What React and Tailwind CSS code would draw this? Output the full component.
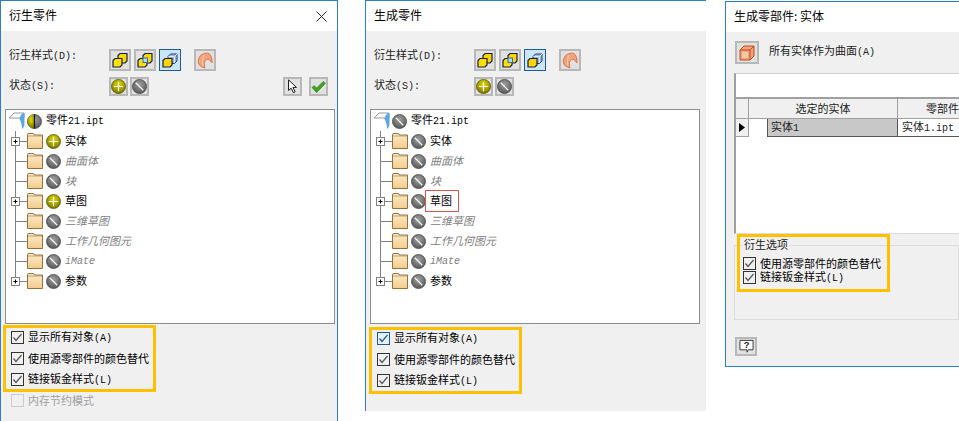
const cjk = "font-['Noto_Sans_CJK_SC','Noto_Sans_CJK_JP',sans-serif]";

function En({ children }) {
  return <span className="font-['Liberation_Mono',monospace] text-[10px]">{children}</span>;
}

function IconBtn({ children, active, size = 'big' }) {
  const box = size === 'big' ? 'w-[22px] h-[22px]' : 'w-[19px] h-[19px]';
  return (
    <div className={`${box} shrink-0 flex items-center justify-center ${active ? 'border border-[#1c5a9c] bg-[#cce4f7]' : 'border-2 border-[#b8b8b8] bg-[#e1e1e1]'}`}>
      {children}
    </div>
  );
}

function Blocks({ middle, cube }) {
  return (
    <svg width="16" height="16" viewBox="0 0 16 16" className="shrink-0">
      {cube ? (
        <>
          <path d="M6 4.5 L8.5 2 H15 V9 L12.5 11.5 H6 Z" fill="#9fb6dc" stroke="#1d3f78" />
          <path d="M6.5 4.5 H12.5 V11 M12.5 4.5 L15 2" fill="none" stroke="#dfe8f5" />
        </>
      ) : (
        <path d="M6 3.5 L8 1.5 H15 V9 L13 11 H6 Z" fill="#ffd400" stroke="#12224f" strokeWidth="1.2" />
      )}
      <path d="M1 8.5 L3 6.5 H10 V13 L8 15 H1 Z" fill={cube ? '#ffd400' : '#ffe000'} stroke="#12224f" strokeWidth="1.2" />
      {middle && <rect x="6" y="6" width="4.5" height="4.5" fill="#bcd6f2" stroke="#2a6fc0" />}
    </svg>
  );
}

function Surface() {
  return (
    <svg width="16" height="17" viewBox="0 0 16 17" className="shrink-0">
      <path d="M2.5 5 C4 2 9 0.5 12 1.5 C14 3 15.5 7 15 11 L12 7.5 C10.5 6.5 8.5 8 7.5 10 C7 12 7.5 14 8 16 C5 15 2 14 1.5 11 C1 9 1.5 7 2.5 5 Z" fill="#f4a27a" stroke="#d77a4c" />
      <path d="M7 3 C5.5 6 5 10 6 14" fill="none" stroke="#ffd0b5" />
    </svg>
  );
}

function Dot({ type, size = 15 }) {
  return (
    <svg width={size} height={size} viewBox="0 0 16 16" className="shrink-0">
      <defs>
        <radialGradient id="dotY" cx="50%" cy="35%" r="65%">
          <stop offset="0" stopColor="#e6e000" />
          <stop offset="1" stopColor="#787000" />
        </radialGradient>
        <radialGradient id="dotG" cx="50%" cy="35%" r="65%">
          <stop offset="0" stopColor="#a0a0a0" />
          <stop offset="1" stopColor="#585858" />
        </radialGradient>
      </defs>
      {type === 'half' ? (
        <>
          <circle cx="8" cy="8" r="7.5" fill="url(#dotG)" stroke="#444" strokeWidth="0.8" />
          <path d="M8 .5 A7.5 7.5 0 0 0 8 15.5 Z" fill="url(#dotY)" />
          <path d="M8 .5 V15.5" stroke="#111" strokeWidth="1.2" />
        </>
      ) : (
        <circle cx="8" cy="8" r="7.5" fill={type === 'on' ? 'url(#dotY)' : 'url(#dotG)'} stroke={type === 'on' ? '#5a5600' : '#444'} strokeWidth="0.8" />
      )}
      {type === 'on' && <path d="M8 3 V13 M3 8 H13" stroke="#fff" strokeWidth="1.2" />}
      {type === 'off' && <path d="M4 4 L12 12" stroke="#fff" strokeWidth="1.2" />}
    </svg>
  );
}

function Folder() {
  return (
    <svg width="16" height="16" viewBox="0 0 16 16" className="shrink-0">
      <defs>
        <linearGradient id="folderFill" x1="0" y1="0" x2="0" y2="1">
          <stop offset="0" stopColor="#fdeccb" />
          <stop offset="1" stopColor="#f3cb8c" />
        </linearGradient>
      </defs>
      <path d="M.5 15.5 V1.8 Q.5.5 2 .5 H6 Q7 .5 7.5 2 H15.5 V15.5 Z" fill="url(#folderFill)" stroke="#94703f" />
      <path d="M1 3 H15" stroke="#a98550" strokeWidth="0.7" />
    </svg>
  );
}

function PartIcon() {
  return (
    <svg width="17" height="20" viewBox="0 0 17 20" className="shrink-0">
      <path d="M1 7 L6 2 H16 V7 Z" fill="#fff" stroke="#999" />
      <path d="M11 7 H12 C12 4 14 2.5 16.5 2 V12 C16.5 15 15.5 17 14 18 C14 14 13 10 11 7 Z" fill="#5ba7e6" />
    </svg>
  );
}

function Connector({ plus, last }) {
  return (
    <svg width="16" height="20" viewBox="0 0 16 20" className="ml-[5px] shrink-0">
      <path d={`M4.5 0 V${last ? 10 : 20} M4.5 10.5 H16`} stroke="#808080" />
      {plus && (
        <>
          <rect x="0.5" y="6.5" width="8" height="8" fill="#fff" stroke="#808080" />
          <path d="M2.5 10.5 H6.5 M4.5 8.5 V12.5" stroke="#000" />
        </>
      )}
    </svg>
  );
}

function TreeRow({ label, dot, plus, last, dim, marked }) {
  return (
    <div className="flex items-center h-5">
      <Connector plus={plus} last={last} />
      <Folder />
      <div className="ml-[3px]"><Dot type={dot} /></div>
      <span className={`relative ml-1 pb-[2px] text-[11px] leading-none whitespace-nowrap ${dim ? 'italic text-[#808080]' : 'text-black'}`}>
        {label}
        {marked && <span className="absolute -left-[5px] -top-[5px] w-[34px] h-[22px] border border-[#e0524f]" />}
      </span>
    </div>
  );
}

function Tree({ root, dots, marked }) {
  return (
    <div className="ml-1 w-[330px] h-[215px] border border-[#8c8c93] bg-white pt-px">
      <div className="flex items-center h-5">
        <div className="ml-[2px]"><PartIcon /></div>
        <div className="ml-[2px]"><Dot type={root} /></div>
        <span className="ml-1 pb-[2px] text-[11px] leading-none whitespace-nowrap">零件<En>21.ipt</En></span>
      </div>
      <TreeRow label="实体" dot={dots[0]} plus />
      <TreeRow label="曲面体" dot="off" dim />
      <TreeRow label="块" dot="off" dim />
      <TreeRow label="草图" dot={dots[1]} plus marked={marked} />
      <TreeRow label="三维草图" dot="off" dim />
      <TreeRow label="工作几何图元" dot="off" dim />
      <TreeRow label={<En>iMate</En>} dot="off" dim />
      <TreeRow label="参数" dot="off" plus last />
    </div>
  );
}

function Check({ label, blue, disabled }) {
  const box = disabled ? 'border-[#cccccc] bg-[#f0f0f0]' : blue ? 'border-[#1c5a9c] bg-[#e8f1fa]' : 'border-[#333333] bg-[#f0f0f0]';
  return (
    <div className="flex items-center h-[13px] whitespace-nowrap">
      <div className={`w-[13px] h-[13px] shrink-0 border ${box} flex items-center justify-center`}>
        {!disabled && (
          <svg width="11" height="11" viewBox="0 0 11 11">
            <path d="M1.5 5.5 L4 8.5 L9.5 2" fill="none" stroke={blue ? '#1c5a9c' : '#555'} strokeWidth="1.2" />
          </svg>
        )}
      </div>
      <span className={`ml-1 text-[11px] leading-none ${disabled ? 'text-[#a0a0a0]' : 'text-black'}`}>{label}</span>
    </div>
  );
}

function Title({ children, close }) {
  return (
    <div className="h-[30px] bg-white flex items-center pl-2 pr-[10px] justify-between text-xs text-black">
      <span className="pb-[2px]">{children}</span>
      {close && (
        <svg width="11" height="11" viewBox="0 0 11 11">
          <path d="M.5 .5 L10.5 10.5 M10.5 .5 L.5 10.5" stroke="#222" />
        </svg>
      )}
    </div>
  );
}

function StyleRows({ root, dots, marked, pick }) {
  return (
    <>
      <div className="flex items-start pt-[18px]">
        <span className="w-[108px] pl-2 text-[11px] leading-none text-[#222]">衍生样式<En>(D):</En></span>
        <div className="flex gap-[3px]">
          <IconBtn><Blocks /></IconBtn>
          <IconBtn><Blocks middle /></IconBtn>
          <IconBtn active><Blocks cube /></IconBtn>
        </div>
        <div className="ml-[13px]"><IconBtn><Surface /></IconBtn></div>
      </div>
      <div className="flex items-start mt-[6px] pr-[9px]">
        <span className="w-[108px] pl-2 pt-[2px] text-[11px] leading-none text-[#222]">状态<En>(S):</En></span>
        <div className="flex gap-[2px]">
          <IconBtn size="small"><Dot type="on" /></IconBtn>
          <IconBtn size="small"><Dot type="off" /></IconBtn>
        </div>
        {pick && (
          <div className="ml-auto flex gap-[7px]">
            <IconBtn size="small">
              <svg width="13" height="15" viewBox="0 0 13 17" className="shrink-0">
                <path d="M2 1 V13 L5 10.5 L7.5 15.5 L9.5 14.5 L7 9.5 H11 Z" fill="#fff" stroke="#000" />
              </svg>
            </IconBtn>
            <IconBtn size="small">
              <svg width="15" height="14" viewBox="0 0 16 14" className="shrink-0">
                <path d="M1 7.5 L3.5 5.5 L6 8 L13 1 L15.5 3 L6 13 Z" fill="#3fa31f" stroke="#2f7d18" strokeWidth="0.6" />
              </svg>
            </IconBtn>
          </div>
        )}
      </div>
      <div className="mt-[13px]"><Tree root={root} dots={dots} marked={marked} /></div>
    </>
  );
}

function DialogOne() {
  return (
    <div className="w-[338px] h-[421px] shrink-0 border-x border-t border-[#2b7cd3] bg-[#f0f0f0]">
      <Title close>衍生零件</Title>
      <StyleRows root="half" dots={['on', 'on']} pick />
      <div className="ml-[2px] mt-px w-[153px] h-[67px] border-[3px] border-[#ffc000] pl-[5px] pt-[3px] flex flex-col gap-2">
        <Check label={<>显示所有对象<En>(A)</En></>} />
        <Check label="使用源零部件的颜色替代" />
        <Check label={<>链接钣金样式<En>(L)</En></>} />
      </div>
      <div className="ml-[10px] mt-[2px]">
        <Check label="内存节约模式" disabled />
      </div>
    </div>
  );
}

function DialogTwo() {
  return (
    <div className="ml-[27px] w-[341px] h-[411px] shrink-0 border-l border-t border-[#2b7cd3] bg-[#f0f0f0]">
      <Title>生成零件</Title>
      <StyleRows root="off" dots={['off', 'off']} marked />
      <div className="ml-[3px] mt-[3px] w-[153px] h-[67px] border-[3px] border-[#ffc000] pl-[5px] pt-[2px] flex flex-col gap-2">
        <Check blue label={<>显示所有对象<En>(A)</En></>} />
        <Check label="使用源零部件的颜色替代" />
        <Check label={<>链接钣金样式<En>(L)</En></>} />
      </div>
    </div>
  );
}

function DialogThree() {
  return (
    <div className="relative ml-[19px] mt-px w-[234px] h-[366px] shrink-0 border-l border-y border-[#2b7cd3] bg-[#f0f0f0] overflow-hidden">
      <Title>生成零部件: 实体</Title>
      <div className="flex items-center pl-[9px] pt-[9px]">
        <div className="w-6 h-[23px] flex items-center justify-center border-2 border-[#b8b8b8] bg-[#e1e1e1]">
          <svg width="16" height="16" viewBox="0 0 16 16" className="shrink-0">
            <path d="M1 5 L5 1 H15 V11 L11 15 H1 Z" fill="#f4a27a" stroke="#b8501f" />
            <path d="M1 5 H11 V15 M11 5 L15 1" fill="none" stroke="#b8501f" />
            <rect x="3" y="7" width="6" height="6" fill="#f9c7a8" />
          </svg>
        </div>
        <span className="ml-[10px] pb-[2px] text-[11px] leading-none text-[#222]">所有实体作为曲面<En>(A)</En></span>
      </div>
      <div className="ml-2 mt-[9px] h-[161px] border-l-2 border-l-[#a0a0a0] border-t border-t-[#d0d0d0] border-b border-b-[#dcdcdc] bg-white">
        <div className="h-[23px]" />
        <div className="flex h-[21px] border-t-2 border-[#a0a0a0] bg-[#f0f0f0] text-[11px] leading-none text-[#222]">
          <div className="w-[13px] border-r border-[#a0a0a0]" />
          <div className="w-[149px] flex items-center justify-center border-r border-[#a0a0a0]">选定的实体</div>
          <div className="flex-1 flex items-center pl-[28px] whitespace-nowrap overflow-hidden">零部件</div>
        </div>
        <div className="flex h-[19px] border-t border-[#a0a0a0] text-[11px] leading-none">
          <div className="w-[13px] flex items-center justify-center bg-[#f0f0f0] border-r border-b border-[#a0a0a0]">
            <svg width="6" height="9" viewBox="0 0 6 9"><path d="M0 0 L6 4.5 L0 9 Z" fill="#000" /></svg>
          </div>
          <div className="w-[18px]" />
          <div className="w-[131px] flex items-center pl-[3px] pb-px bg-[#c8c8c8] border-l border-b border-r border-[#555555] text-[#222]">
            <span>实体<En>1</En></span>
          </div>
          <div className="flex-1 flex items-center pl-1 pb-px whitespace-nowrap overflow-hidden border-b border-[#555555] text-[#222]">
            <span>实体<En>1.ipt</En></span>
          </div>
        </div>
      </div>
      <div className="ml-2 mt-[11px] h-[75px] border border-[#dcdcdc]">
        <span className="block -mt-[7px] ml-2 w-fit px-px bg-[#f0f0f0] text-[11px] leading-none text-[#222]">衍生选项</span>
        <div className="ml-2 mt-[7px] flex flex-col gap-px">
          <Check label="使用源零部件的颜色替代" />
          <Check label={<>链接钣金样式<En>(L)</En></>} />
        </div>
      </div>
      <div className="ml-[9px] mt-[17px] w-[22px] h-[19px] flex items-center justify-center border-2 border-[#b8b8b8] bg-[#e1e1e1]">
        <svg width="15" height="15" viewBox="0 0 16 16" className="shrink-0">
          <path d="M1 1.5 H15 V11.5 H10 L8.5 14 V11.5 H1 Z" fill="#fff" stroke="#333" />
          <text x="8" y="10" textAnchor="middle" fontSize="10" fontWeight="700" fontFamily="Liberation Sans" fill="#222">?</text>
        </svg>
      </div>
      <div className="absolute left-[11px] top-[232px] w-[153px] h-[58px] border-[3px] border-[#ffc000]" />
    </div>
  );
}

export default function App() {
  return (
    <div className={`flex items-start w-[959px] h-[421px] overflow-hidden bg-white ${cjk}`}>
      <DialogOne />
      <DialogTwo />
      <DialogThree />
    </div>
  );
}
